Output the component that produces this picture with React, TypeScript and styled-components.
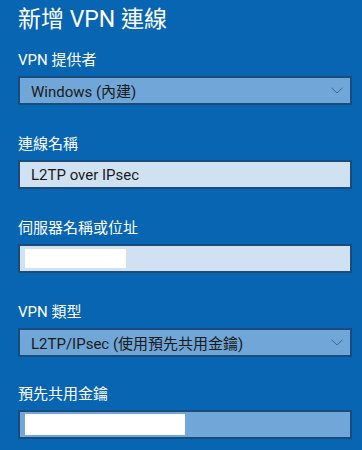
import React from "react";
import styled, { createGlobalStyle } from "styled-components";

const Global = createGlobalStyle`
  html, body {
    margin: 0;
    padding: 0;
    background: #0865b2;
  }
  body {
    width: 362px;
    height: 450px;
    overflow: hidden;
    font-family: Roboto, "Noto Sans CJK TC", sans-serif;
  }
`;

const Page = styled.div`
  display: flex;
  flex-direction: column;
  padding: 5px 10px 0 18px;
  background: #0865b2;
  height: 450px;
  box-sizing: border-box;
`;

const Title = styled.h1`
  margin: 0;
  font-weight: 400;
  font-size: 23px;
  line-height: 30px;
  color: #ffffff;
  white-space: nowrap;
`;

const Field = styled.div<{ $top: number }>`
  display: flex;
  flex-direction: column;
  gap: 6px;
  margin-top: ${(p) => p.$top}px;
`;

const Label = styled.div`
  font-size: 15px;
  line-height: 20px;
  color: #ffffff;
  white-space: nowrap;
`;

const Box = styled.div<{ $fill: "mid" | "light" }>`
  box-sizing: border-box;
  height: 29px;
  border: 2px solid #1a4b7b;
  background: ${(p) => (p.$fill === "light" ? "#d0e2f2" : "#70a7d8")};
  display: flex;
  align-items: center;
  padding: 0 7px 0 11px;
  color: #1a1a1a;
  font-size: 15px;
  white-space: nowrap;
`;

const Value = styled.span`
  flex: 1;
`;

const Redacted = styled.div<{ $w: number; $h: number }>`
  width: ${(p) => p.$w}px;
  height: ${(p) => p.$h}px;
  background: #ffffff;
  margin-left: -6px;
`;

const Chevron = () => (
  <svg width="12" height="7" viewBox="0 0 12 7" aria-hidden="true">
    <path d="M0.5 0.8 L6 6 L11.5 0.8" fill="none" stroke="#3b6b98" strokeWidth="1" />
  </svg>
);

export default function App() {
  return (
    <>
      <Global />
      <Page>
        <Title>新增 VPN 連線</Title>
        <Field $top={15}>
          <Label>VPN 提供者</Label>
          <Box $fill="mid">
            <Value>Windows (內建)</Value>
            <Chevron />
          </Box>
        </Field>
        <Field $top={29}>
          <Label>連線名稱</Label>
          <Box $fill="light">
            <Value>L2TP over IPsec</Value>
          </Box>
        </Field>
        <Field $top={29}>
          <Label>伺服器名稱或位址</Label>
          <Box $fill="light">
            <Redacted $w={101} $h={19} />
          </Box>
        </Field>
        <Field $top={29}>
          <Label>VPN 類型</Label>
          <Box $fill="mid">
            <Value>L2TP/IPsec (使用預先共用金鑰)</Value>
            <Chevron />
          </Box>
        </Field>
        <Field $top={27}>
          <Label>預先共用金鑰</Label>
          <Box $fill="mid">
            <Redacted $w={160} $h={21} />
          </Box>
        </Field>
      </Page>
    </>
  );
}
